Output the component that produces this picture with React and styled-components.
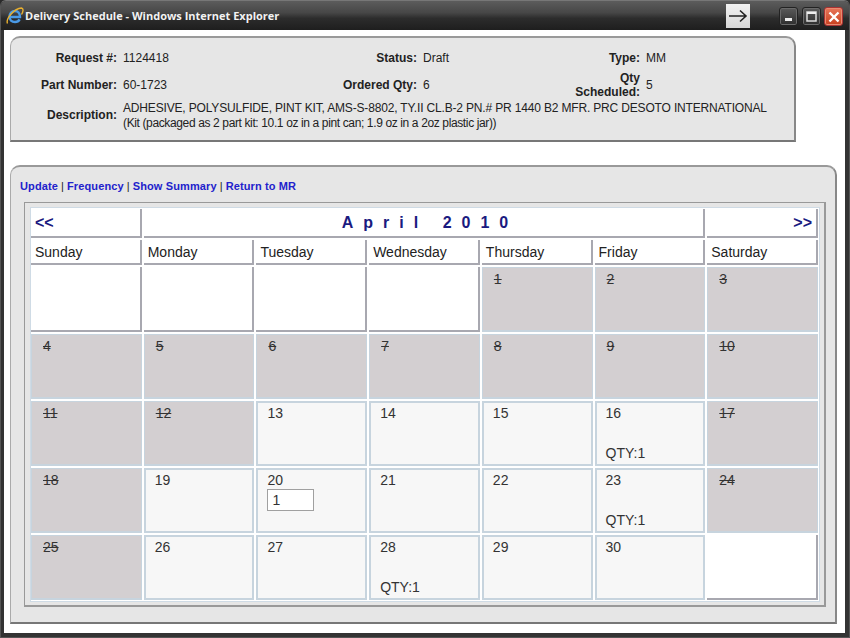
import React from "react";
import styled, { createGlobalStyle } from "styled-components";

const GlobalStyle = createGlobalStyle`
  html, body {
    margin: 0;
    padding: 0;
    background: #2a2a2a;
  }
  body {
    font-family: "Liberation Sans", Arial, sans-serif;
  }
`;

const Window = styled.div`
  width: 850px;
  height: 638px;
  box-sizing: border-box;
  display: flex;
  flex-direction: column;
  overflow: hidden;
  background: #333;
  border: 1px solid #555;
  border-top-color: #777;
  border-radius: 6px 6px 0 0;
`;

const TitleBar = styled.div`
  height: 29px;
  flex: none;
  display: flex;
  align-items: center;
  padding: 0 6px 0 5px;
  background: linear-gradient(#5c5c5c 0%, #474747 40%, #2c2c2c 60%, #1e1e1e 100%);
`;

const Title = styled.span`
  margin-left: 1px;
  color: #f2f2f2;
  font-size: 11px;
  font-weight: 700;
  font-family: "Open Sans", sans-serif;
  white-space: nowrap;
`;

const TitleSpacer = styled.div`
  flex: 1;
`;

const GoButton = styled.div`
  width: 24px;
  height: 24px;
  margin-top: 1px;
  margin-right: 25px;
  background: linear-gradient(#f2f2f2, #d6d6d6);
  display: flex;
  align-items: center;
  justify-content: center;
`;

const CaptionButton = styled.div`
  width: 19px;
  height: 19px;
  margin-left: ${(p) => p.$gap || 3}px;
  margin-top: 2px;
  box-sizing: border-box;
  border: 1px solid ${(p) => (p.$close ? "#a33" : "#222")};
  border-radius: 3px;
  box-shadow: inset 0 0 0 1px ${(p) => (p.$close ? "#e98a70" : "#6a6a6a")};
  background: ${(p) =>
    p.$close
      ? "linear-gradient(#e8765a, #c8401f)"
      : "linear-gradient(#5a5a5a, #2e2e2e)"};
  display: flex;
  align-items: center;
  justify-content: center;
`;

const Page = styled.div`
  flex: 1;
  margin: 0 4px 4px 3px;
  background: #fff;
  box-sizing: border-box;
  padding: 6px 0 0 6px;
`;

const Panel = styled.div`
  box-sizing: border-box;
  background: #e6e6e6;
  border: 1px solid #aaa;
  border-top: 2px solid #999;
  border-right: 2px solid #888;
  border-bottom: 2px solid #777;
  border-radius: 10px 10px 0 0;
`;

const InfoPanel = styled(Panel)`
  width: 786px;
  height: 106px;
  padding-top: 9px;
`;

const InfoRow = styled.div`
  display: grid;
  grid-template-columns: 106px 157px 143px 152px 71px 1fr;
  height: ${(p) => p.$height}px;
  align-items: center;
`;

const DescriptionRow = styled.div`
  display: grid;
  grid-template-columns: 106px 1fr;
  align-items: center;
`;

const Label = styled.div`
  font-weight: 700;
  font-size: 12px;
  text-align: right;
  line-height: 14px;
  color: #222;
`;

const DescriptionLabel = styled(Label)`
  margin-top: -2px;
`;

const Value = styled.div`
  font-size: 12px;
  line-height: 15px;
  padding-left: 6px;
  color: #222;
  white-space: nowrap;
`;

const DescriptionLine = styled.div`
  letter-spacing: ${(p) => p.$tracking}px;
`;

const SchedulePanel = styled(Panel)`
  width: 827px;
  height: 459px;
  margin-top: 23px;
  padding: 13px 9px 0 9px;
`;

const LinkBar = styled.div`
  font-size: 11px;
  font-weight: 700;
  line-height: 13px;
  letter-spacing: 0.12px;
  color: #222;
`;

const TextLink = styled.a`
  color: #2222cc;
  text-decoration: none;
  cursor: pointer;
`;

const Separator = styled.span`
  font-weight: 400;
  padding: 0 3px;
`;

const CalendarFrame = styled.div`
  box-sizing: border-box;
  width: 802px;
  height: 405px;
  margin: 9px 0 0 4px;
  padding: 4px 4px 3px 5px;
  border: 1px solid #999;
  border-right: 2px solid #999;
  border-bottom: 2px solid #999;
`;

const Calendar = styled.div`
  box-sizing: border-box;
  height: 395px;
  padding: 1px 1px 2px 0;
  background: #fff;
  border: 1px solid #cfdbe5;
  display: grid;
  grid-template-columns: repeat(7, 1fr);
  grid-template-rows: 29px 25px repeat(5, 65px);
  gap: 2px;
`;

const HeadCell = styled.div`
  box-sizing: border-box;
  background: #fff;
  border-right: 2px solid #a8a8b0;
  border-bottom: 2px solid #a8a8b0;
  display: flex;
  align-items: center;
  padding: 0 4px;
  color: #222;
  font-size: 14px;
`;

const NavCell = styled(HeadCell)`
  grid-column: span ${(p) => p.$span || 1};
  justify-content: ${(p) => p.$align || "flex-start"};
  color: #1a1a80;
  font-weight: 700;
  font-size: 16px;
`;

const MonthTitle = styled.span`
  margin-left: 13px;
  letter-spacing: 10px;
`;

const DayCell = styled.div`
  box-sizing: border-box;
  display: flex;
  flex-direction: column;
  padding: 2px 9px 3px;
  font-size: 14px;
  line-height: 16px;
  color: #333;
  ${(p) =>
    p.$kind === "past" &&
    `background: #d3cfd1;
     padding: 3px 11px;
     border: 2px solid #c7d4de;
     border-width: 1px 1px 2px 1px;
     text-decoration: line-through;`}
  ${(p) =>
    p.$kind === "open" &&
    `background: #f7f7f7;
     border: 2px solid #c7d4de;`}
  ${(p) =>
    p.$kind === "blank" &&
    `background: #fff;
     border-right: 2px solid #a8a8b0;
     border-bottom: 2px solid #a8a8b0;`}
`;

const Qty = styled.div`
  margin-top: auto;
`;

const QtyInput = styled.input`
  box-sizing: border-box;
  width: 47px;
  height: 22px;
  margin: 1px 0 0 0;
  padding: 0 4px;
  border: 1px solid #a0a0a0;
  background: #fff;
  color: #333;
  font: 14px "Liberation Sans", Arial, sans-serif;
  outline: none;
`;

const DAY_NAMES = ["Sunday", "Monday", "Tuesday", "Wednesday", "Thursday", "Friday", "Saturday"];

const CELLS = [
  { kind: "blank" }, { kind: "blank" }, { kind: "blank" }, { kind: "blank" },
  ...[1, 2, 3, 4, 5, 6, 7, 8, 9, 10, 11, 12].map((day) => ({ kind: "past", day })),
  ...[13, 14, 15].map((day) => ({ kind: "open", day })),
  { kind: "open", day: 16, qty: 1 },
  { kind: "past", day: 17 },
  { kind: "past", day: 18 },
  { kind: "open", day: 19 },
  { kind: "open", day: 20, input: "1" },
  { kind: "open", day: 21 },
  { kind: "open", day: 22 },
  { kind: "open", day: 23, qty: 1 },
  { kind: "past", day: 24 },
  { kind: "past", day: 25 },
  { kind: "open", day: 26 },
  { kind: "open", day: 27 },
  { kind: "open", day: 28, qty: 1 },
  { kind: "open", day: 29 },
  { kind: "open", day: 30 },
  { kind: "blank" },
];

const IeLogo = () => (
  <svg width="18" height="18" viewBox="0 0 18 18">
    <path d="M3.5 10 H14 C14 6 11.8 4 9 4 C5.8 4 3.5 6.5 3.5 9.8 C3.5 13 5.8 15 9 15 C11 15 12.8 14 13.6 12.4" fill="none" stroke="#4a9ae6" strokeWidth="2.4" />
    <path d="M1.5 16.5 C-0.5 12 8 1.5 15.5 1 C18 1.5 17 5 15.5 7.5" fill="none" stroke="#e8b030" strokeWidth="1.4" />
  </svg>
);

const App = () => (
  <>
    <GlobalStyle />
    <Window>
      <TitleBar>
        <IeLogo />
        <Title>Delivery Schedule - Windows Internet Explorer</Title>
        <TitleSpacer />
        <GoButton>
          <svg width="20" height="14" viewBox="0 0 20 14">
            <path d="M1 7 H18 M12 1.5 L18 7 L12 12.5" fill="none" stroke="#222" strokeWidth="1.6" />
          </svg>
        </GoButton>
        <CaptionButton $gap={4}>
          <svg width="9" height="9" viewBox="0 0 9 9">
            <rect x="1" y="6" width="7" height="3" fill="#eee" />
          </svg>
        </CaptionButton>
        <CaptionButton $gap={4}>
          <svg width="11" height="11" viewBox="0 0 11 11">
            <rect x="1" y="1" width="9" height="9" fill="none" stroke="#ddd" strokeWidth="1.5" />
            <rect x="1" y="1" width="9" height="2" fill="#eee" />
          </svg>
        </CaptionButton>
        <CaptionButton $gap={3} $close>
          <svg width="12" height="12" viewBox="0 0 12 12">
            <path d="M1.5 1.5 L10.5 10.5 M10.5 1.5 L1.5 10.5" stroke="#fff" strokeWidth="2.4" />
          </svg>
        </CaptionButton>
      </TitleBar>
      <Page>
        <InfoPanel>
          <InfoRow $height={22}>
            <Label>Request #:</Label>
            <Value>1124418</Value>
            <Label>Status:</Label>
            <Value>Draft</Value>
            <Label>Type:</Label>
            <Value>MM</Value>
          </InfoRow>
          <InfoRow $height={32}>
            <Label>Part Number:</Label>
            <Value>60-1723</Value>
            <Label>Ordered Qty:</Label>
            <Value>6</Value>
            <Label>Qty Scheduled:</Label>
            <Value>5</Value>
          </InfoRow>
          <DescriptionRow>
            <DescriptionLabel>Description:</DescriptionLabel>
            <Value>
              <DescriptionLine $tracking={-0.165}>
                ADHESIVE, POLYSULFIDE, PINT KIT, AMS-S-8802, TY.II CL.B-2 PN.# PR 1440 B2 MFR. PRC DESOTO INTERNATIONAL
              </DescriptionLine>
              <DescriptionLine $tracking={-0.37}>
                (Kit (packaged as 2 part kit: 10.1 oz in a pint can; 1.9 oz in a 2oz plastic jar))
              </DescriptionLine>
            </Value>
          </DescriptionRow>
        </InfoPanel>
        <SchedulePanel>
          <LinkBar>
            <TextLink>Update</TextLink>
            <Separator>|</Separator>
            <TextLink>Frequency</TextLink>
            <Separator>|</Separator>
            <TextLink>Show Summary</TextLink>
            <Separator>|</Separator>
            <TextLink>Return to MR</TextLink>
          </LinkBar>
          <CalendarFrame>
            <Calendar>
              <NavCell>&lt;&lt;</NavCell>
              <NavCell $span={5} $align="center">
                <MonthTitle>April 2010</MonthTitle>
              </NavCell>
              <NavCell $align="flex-end">&gt;&gt;</NavCell>
              {DAY_NAMES.map((name) => (
                <HeadCell key={name}>{name}</HeadCell>
              ))}
              {CELLS.map((cell, i) => (
                <DayCell key={i} $kind={cell.kind}>
                  {cell.day}
                  {cell.input && <QtyInput defaultValue={cell.input} />}
                  {cell.qty && <Qty>QTY:{cell.qty}</Qty>}
                </DayCell>
              ))}
            </Calendar>
          </CalendarFrame>
        </SchedulePanel>
      </Page>
    </Window>
  </>
);

export default App;
